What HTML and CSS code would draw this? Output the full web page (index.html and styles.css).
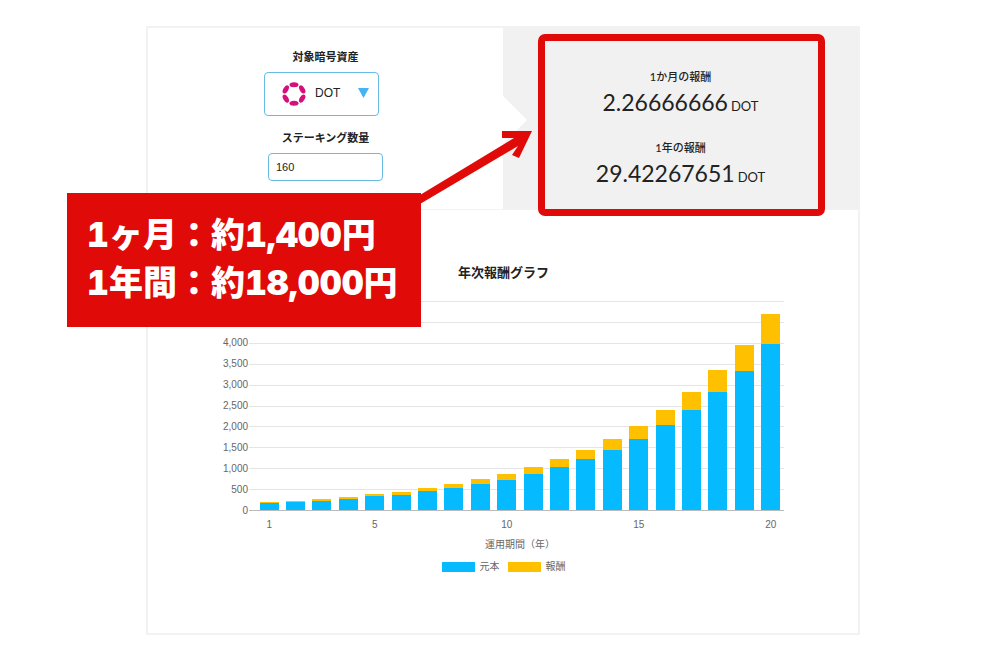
FILE: index.html
```html
<!DOCTYPE html>
<html lang="ja">
<head>
<meta charset="utf-8">
<meta name="viewport" content="width=device-width, initial-scale=1">
<title>ステーキング報酬</title>
<link rel="stylesheet" href="styles.css">
</head>
<body>
<main class="page">
  <section class="card">
    <div class="summary">
      <form class="inputs">
        <label class="field-label" for="asset">対象暗号資産</label>
        <div class="asset">
          <select class="asset-select" id="asset"><option>DOT</option></select>
          <svg class="asset-logo" viewBox="0 0 24 24" aria-hidden="true">
            <g fill="#d6107a">
              <ellipse cx="12" cy="2.7" rx="4.5" ry="2.5"/>
              <ellipse cx="12" cy="21.3" rx="4.5" ry="2.5"/>
              <ellipse cx="3.8" cy="7.4" rx="4.5" ry="2.5" transform="rotate(-60 3.8 7.4)"/>
              <ellipse cx="20.2" cy="7.4" rx="4.5" ry="2.5" transform="rotate(60 20.2 7.4)"/>
              <ellipse cx="3.8" cy="16.6" rx="4.5" ry="2.5" transform="rotate(60 3.8 16.6)"/>
              <ellipse cx="20.2" cy="16.6" rx="4.5" ry="2.5" transform="rotate(-60 20.2 16.6)"/>
            </g>
          </svg>
          <svg class="asset-caret" viewBox="0 0 11 10" aria-hidden="true"><path d="M0 0H11L5.5 10Z" fill="#46b3f3"/></svg>
        </div>
        <label class="field-label" for="amount">ステーキング数量</label>
        <input class="amount" id="amount" type="text" value="160">
      </form>
      <div class="rewards">
        <div class="reward">
          <h2 class="reward-label">1か月の報酬</h2>
          <p class="reward-value">2.26666666<span class="unit">DOT</span></p>
        </div>
        <div class="reward">
          <h2 class="reward-label">1年の報酬</h2>
          <p class="reward-value">29.42267651<span class="unit">DOT</span></p>
        </div>
        <div class="highlight"></div>
      </div>
    </div>
    <div class="graph">
      <h2 class="graph-title">年次報酬グラフ</h2>
      <div class="chart">
        <div class="y-axis">
          <span></span><span></span><span>4,000</span><span>3,500</span><span>3,000</span><span>2,500</span><span>2,000</span><span>1,500</span><span>1,000</span><span>500</span><span>0</span>
        </div>
        <div class="plot">
          <div class="lines"><i></i><i></i><i></i><i></i><i></i><i></i><i></i><i></i><i></i><i></i></div>
          <div class="bars">
            <div class="bar" style="height:3.79%"></div>
            <div class="bar" style="height:4.49%"></div>
            <div class="bar" style="height:5.31%"></div>
            <div class="bar" style="height:6.29%"></div>
            <div class="bar" style="height:7.44%"></div>
            <div class="bar" style="height:8.81%"></div>
            <div class="bar" style="height:10.43%"></div>
            <div class="bar" style="height:12.35%"></div>
            <div class="bar" style="height:14.62%"></div>
            <div class="bar" style="height:17.31%"></div>
            <div class="bar" style="height:20.49%"></div>
            <div class="bar" style="height:24.26%"></div>
            <div class="bar" style="height:28.72%"></div>
            <div class="bar" style="height:34%"></div>
            <div class="bar" style="height:40.26%"></div>
            <div class="bar" style="height:47.66%"></div>
            <div class="bar" style="height:56.42%"></div>
            <div class="bar" style="height:66.8%"></div>
            <div class="bar" style="height:79.08%"></div>
            <div class="bar" style="height:93.63%"></div>
          </div>
        </div>
        <div class="x-axis">
          <span>1</span><span></span><span></span><span></span><span>5</span><span></span><span></span><span></span><span></span><span>10</span><span></span><span></span><span></span><span></span><span>15</span><span></span><span></span><span></span><span></span><span>20</span>
        </div>
        <p class="x-title">運用期間（年）</p>
      </div>
      <ul class="legend">
        <li class="legend-item"><span class="swatch"></span>元本</li>
        <li class="legend-item"><span class="swatch swatch-reward"></span>報酬</li>
      </ul>
    </div>
  </section>
  <svg class="arrow" viewBox="0 0 112 74" aria-hidden="true">
    <path d="M112 1H82V8H94L0 65V74L98 16L92 25L99 28Z" fill="#e00a08"/>
  </svg>
  <p class="callout">1ヶ月：約1,400円<br>1年間：約18,000円</p>
</main>
</body>
</html>
```
FILE: styles.css
```css
* {
  box-sizing: border-box;
}

body {
  margin: 0;
  background: #fff;
  color: #222;
  font-family: "Liberation Sans", "Noto Sans CJK JP", sans-serif;
}

h2,
p,
ul {
  margin: 0;
  padding: 0;
}

.page {
  position: relative;
  padding: 26px 140px 21px 146px;
}

.card {
  border: 2px solid #f2f2f2;
  padding-bottom: 59px;
}

.summary {
  display: grid;
  grid-template-columns: 1fr 1fr;
}

.inputs {
  display: flex;
  flex-direction: column;
  align-items: center;
  padding: 21px 0 28px;
  border-bottom: 1px solid #f2f2f2;
}

.field-label {
  font-size: 11px;
  font-weight: 700;
  line-height: 16px;
}

.asset {
  position: relative;
  width: 115px;
  margin: 7px 8px 14px 0;
}

.asset-select {
  display: block;
  width: 100%;
  height: 44px;
  padding: 0 24px 3px 50px;
  border: 1px solid #68bce2;
  border-radius: 4px;
  appearance: none;
  background: #fff;
  color: #222;
  font-family: inherit;
  font-size: 12px;
}

.asset-logo {
  position: absolute;
  top: 10px;
  left: 18px;
  width: 24px;
  height: 24px;
  pointer-events: none;
}

.asset-caret {
  position: absolute;
  top: 16px;
  right: 10px;
  width: 11px;
  height: 10px;
  pointer-events: none;
}

.amount {
  width: 115px;
  height: 28px;
  margin-top: 7px;
  padding: 0 7px;
  border: 1px solid #68bce2;
  border-radius: 4px;
  background: #fff;
  color: #222;
  font-family: inherit;
  font-size: 11px;
}

.rewards {
  position: relative;
  display: flex;
  flex-direction: column;
  gap: 24px;
  padding-top: 41px;
  background: #f1f1f1;
  font-family: Lato, "Noto Sans CJK JP", sans-serif;
  text-align: center;
}

.rewards::before {
  content: "";
  position: absolute;
  top: 68px;
  left: 0;
  width: 24px;
  height: 48px;
  background: #fff;
  clip-path: polygon(0 0, 100% 50%, 0 100%);
}

.reward-label {
  font-size: 11px;
  font-weight: 500;
  line-height: 16px;
}

.reward-value {
  padding-top: 3px;
  font-size: 23px;
  line-height: 28px;
}

.unit {
  margin-left: 3px;
  font-size: 13px;
  line-height: 16px;
}

.highlight {
  position: absolute;
  inset: 6px 33px -6px 35px;
  border: 7px solid #e00a08;
  border-radius: 7px;
}

.graph {
  padding: 53px 74px 0 75px;
}

.graph-title {
  font-size: 13px;
  line-height: 20px;
  text-align: center;
}

.chart {
  display: grid;
  grid-template-columns: 25px 1fr;
  column-gap: 1px;
  margin-top: 18px;
  color: #666;
  font-size: 10px;
  line-height: 12px;
}

.y-axis {
  display: flex;
  flex-direction: column;
  justify-content: space-between;
  margin: -6px 0;
  text-align: right;
}

.y-axis span {
  height: 12px;
}

.plot {
  display: grid;
  height: 210px;
  border-bottom: 1px solid #bbb;
}

.lines,
.bars {
  grid-area: 1 / 1;
  display: flex;
  min-height: 0;
}

.lines {
  flex-direction: column;
}

.lines i {
  flex: 1;
  border-top: 1px solid #e5e5e5;
}

.bars,
.x-axis {
  margin-left: 7px;
}

.bars {
  align-items: flex-end;
  justify-content: space-around;
}

.bar {
  width: 19px;
  background: linear-gradient(#ffc000 15.5%, #05baff 15.5%);
}

.x-axis {
  grid-column: 2;
  display: grid;
  grid-template-columns: repeat(20, 1fr);
  padding-top: 8px;
  text-align: center;
}

.x-title {
  grid-column: 2;
  padding-top: 7px;
  padding-left: 7px;
  line-height: 14px;
  text-align: center;
}

.legend {
  display: flex;
  justify-content: center;
  gap: 8px;
  padding-top: 8px;
  color: #666;
  font-size: 10px;
  line-height: 14px;
  list-style: none;
}

.legend-item {
  display: flex;
  align-items: center;
  gap: 5px;
}

.swatch {
  width: 33px;
  height: 10px;
  background: #05baff;
}

.swatch-reward {
  background: #ffc000;
}

.arrow {
  position: absolute;
  top: 130px;
  left: 420px;
  width: 112px;
  height: 74px;
}

.callout {
  position: absolute;
  top: 193px;
  left: 67px;
  width: 354px;
  height: 134px;
  padding: 18px 20px;
  background: #e00a08;
  color: #fff;
  font-family: Inter, "Noto Sans CJK JP", sans-serif;
  font-size: 34px;
  font-variant-numeric: tabular-nums;
  font-weight: 900;
  line-height: 48px;
  white-space: nowrap;
}
```
